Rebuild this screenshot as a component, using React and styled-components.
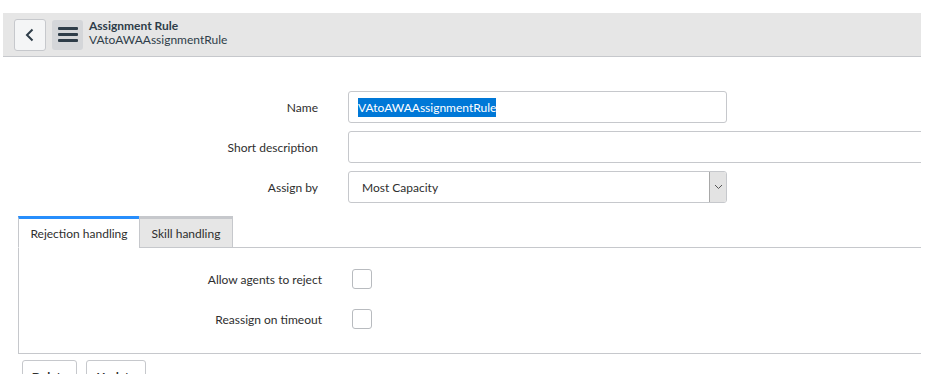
import React from "react";
import styled, { createGlobalStyle } from "styled-components";

const GlobalStyle = createGlobalStyle`
  html, body {
    margin: 0;
    padding: 0;
    background: #fff;
    overflow: hidden;
  }
  body {
    font-family: Lato, "Open Sans", Arial, sans-serif;
    font-size: 12px;
    color: #2e2e2e;
  }
  ::selection {
    background: #0078d7;
    color: #fff;
  }
`;

// Page frame, the right part of the window stays blank
const Page = styled.div`
  width: 921px;
  overflow: hidden;
`;

const Header = styled.header`
  margin: 13px 0 0 3px;
  height: 43px;
  background: #e6e6e6;
  border-bottom: 1px solid #c6c8cc;
  display: flex;
  align-items: center;
  padding-left: 11px;
  gap: 6px;
`;

const BackButton = styled.button`
  width: 32px;
  height: 32px;
  box-sizing: border-box;
  border: 1px solid #c6c8cc;
  border-radius: 3px;
  background: #f4f5f6;
  display: flex;
  align-items: center;
  justify-content: center;
  padding: 0;
  color: #2e3d49;
`;

const MenuButton = styled.button`
  width: 31px;
  height: 30px;
  border: none;
  border-radius: 3px;
  background: #d4d6d9;
  display: flex;
  flex-direction: column;
  align-items: center;
  justify-content: center;
  gap: 3px;
  padding: 0;
`;

const Bar = styled.span`
  width: 20px;
  height: 3px;
  background: #2e3d49;
  border-radius: 1px;
`;

const TitleBlock = styled.div`
  display: flex;
  flex-direction: column;
  line-height: 14px;
  color: #2e3d49;
  margin-top: -4px;
`;

const Title = styled.div`
  font-weight: 700;
`;

const Form = styled.form`
  padding-top: 34px;
  display: flex;
  flex-direction: column;
  gap: 8px;
`;

const Row = styled.div`
  display: grid;
  grid-template-columns: ${({ labelWidth }) => labelWidth}px 1fr;
  column-gap: 30px;
  align-items: center;
  min-height: ${({ rowHeight }) => rowHeight || 32}px;
`;

const Label = styled.label`
  text-align: right;
  color: #2e2e2e;
  white-space: nowrap;
`;

const TextInput = styled.div`
  box-sizing: border-box;
  height: 32px;
  width: ${({ wide }) => (wide ? "700px" : "379px")};
  border: 1px solid #c6c8cc;
  border-radius: 3px;
  padding: 0 9px;
  display: flex;
  align-items: center;
  background: #fff;
`;

const Selected = styled.span`
  background: #0078d7;
  color: #fff;
  line-height: 19px;
`;

const Select = styled.div`
  box-sizing: border-box;
  height: 32px;
  width: 379px;
  border: 1px solid #c6c8cc;
  border-radius: 3px;
  display: flex;
  align-items: stretch;
  overflow: hidden;
`;

const SelectValue = styled.span`
  flex: 1;
  display: flex;
  align-items: center;
  padding-left: 13px;
`;

const SelectArrow = styled.span`
  width: 16px;
  background: #e3e3e3;
  border-left: 1px solid #a8a8a8;
  display: flex;
  align-items: center;
  justify-content: center;
  color: #555;
`;

const Tabs = styled.div`
  margin: 13px 0 0 18px;
`;

const TabStrip = styled.div`
  display: flex;
  align-items: flex-end;
`;

const Tab = styled.div`
  box-sizing: border-box;
  height: 32px;
  width: ${({ w }) => w}px;
  display: flex;
  align-items: center;
  justify-content: center;
  white-space: nowrap;
  background: ${({ active }) => (active ? "#fff" : "#e6e6e6")};
  border-top: 3px solid ${({ active }) => (active ? "#278efc" : "#c6c8cc")};
  border-left: 1px solid #c6c8cc;
  border-right: ${({ active }) => (active ? "none" : "1px solid #c6c8cc")};
  border-bottom: 1px solid ${({ active }) => (active ? "#fff" : "#c6c8cc")};
  margin-bottom: -1px;
  position: relative;
  z-index: 1;
`;

const Panel = styled.div`
  border: 1px solid #c6c8cc;
  border-right: none;
  padding: 21px 0 24px;
  display: flex;
  flex-direction: column;
  gap: 20px;
`;

const Checkbox = styled.span`
  box-sizing: border-box;
  width: 20px;
  height: 20px;
  border: 1px solid #b8bbbf;
  border-radius: 3px;
  background: #fff;
`;

const Buttons = styled.div`
  display: flex;
  gap: 9px;
  padding: 6px 0 0 22px;
`;

const Button = styled.button`
  box-sizing: border-box;
  height: 32px;
  width: ${({ w }) => w}px;
  padding: 0;
  border: 1px solid #c6c8cc;
  border-radius: 3px;
  background: #fff;
  font-family: inherit;
  font-size: 12px;
  font-weight: 700;
  color: #2e2e2e;
`;

const Chevron = () => (
  <svg width="12" height="14" viewBox="0 0 12 14" fill="none">
    <path d="M8.5 1.5 3 7l5.5 5.5" stroke="currentColor" strokeWidth="2" />
  </svg>
);

const SmallChevron = () => (
  <svg width="9" height="6" viewBox="0 0 9 6" fill="none">
    <path d="M1 1l3.5 3.5L8 1" stroke="currentColor" strokeWidth="1" />
  </svg>
);

export default function App() {
  return (
    <Page>
      <GlobalStyle />
      <Header>
        <BackButton>
          <Chevron />
        </BackButton>
        <MenuButton>
          <Bar />
          <Bar />
          <Bar />
        </MenuButton>
        <TitleBlock>
          <Title>Assignment Rule</Title>
          <div>VAtoAWAAssignmentRule</div>
        </TitleBlock>
      </Header>

      <Form>
        <Row labelWidth={318}>
          <Label>Name</Label>
          <TextInput>
            <Selected>VAtoAWAAssignmentRule</Selected>
          </TextInput>
        </Row>
        <Row labelWidth={318}>
          <Label>Short description</Label>
          <TextInput wide />
        </Row>
        <Row labelWidth={318}>
          <Label>Assign by</Label>
          <Select>
            <SelectValue>Most Capacity</SelectValue>
            <SelectArrow>
              <SmallChevron />
            </SelectArrow>
          </Select>
        </Row>
      </Form>

      <Tabs>
        <TabStrip>
          <Tab active w={121}>Rejection handling</Tab>
          <Tab w={94}>Skill handling</Tab>
        </TabStrip>
        <Panel>
          <Row labelWidth={303} rowHeight={20}>
            <Label>Allow agents to reject</Label>
            <Checkbox />
          </Row>
          <Row labelWidth={303} rowHeight={20}>
            <Label>Reassign on timeout</Label>
            <Checkbox />
          </Row>
        </Panel>
      </Tabs>

      <Buttons>
        <Button w={55}>Delete</Button>
        <Button w={60}>Update</Button>
      </Buttons>
    </Page>
  );
}
